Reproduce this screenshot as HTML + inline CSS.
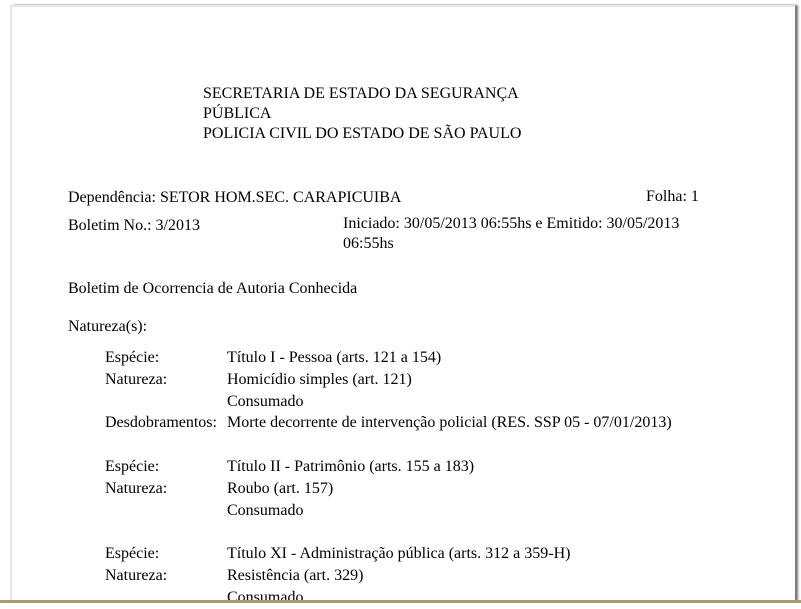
<!DOCTYPE html>
<html><head><style>
html,body{margin:0;padding:0;background:#fff;width:801px;height:603px;overflow:hidden;font-family:"Liberation Serif",serif;font-size:16px;color:#000}
.page{position:absolute;left:10px;top:5px;width:783px;height:594px;border-left:2px solid #e6e6e6;border-top:2px solid #e6e6e6;box-shadow:3px 0 2px #777}
.t{position:absolute;white-space:nowrap;line-height:20px}
.bot{position:absolute;left:0;top:600px;width:801px;height:3px;background:#a89c78}
</style></head><body>
<div class="page"></div>
<div class="t" style="left:203px;top:84px">SECRETARIA DE ESTADO DA SEGURANÇA<br>PÚBLICA<br>POLICIA CIVIL DO ESTADO DE SÃO PAULO</div>
<div class="t" style="left:68px;top:188px">Dependência: SETOR HOM.SEC. CARAPICUIBA</div>
<div class="t" style="left:646px;top:187px">Folha: 1</div>
<div class="t" style="left:68px;top:216px">Boletim No.: 3/2013</div>
<div class="t" style="left:343px;top:214px">Iniciado: 30/05/2013 06:55hs e Emitido: 30/05/2013<br>06:55hs</div>
<div class="t" style="left:68px;top:279px">Boletim de Ocorrencia de Autoria Conhecida</div>
<div class="t" style="left:68px;top:317px">Natureza(s):</div>
<div class="t" style="left:105px;top:347px;line-height:21.8px">Espécie:<br>Natureza:<br><br>Desdobramentos:<br><br>Espécie:<br>Natureza:<br><br><br>Espécie:<br>Natureza:</div>
<div class="t" style="left:227px;top:347px;line-height:21.8px">Título I - Pessoa (arts. 121 a 154)<br>Homicídio simples (art. 121)<br>Consumado<br>Morte decorrente de intervenção policial (RES. SSP 05 - 07/01/2013)<br><br>Título II - Patrimônio (arts. 155 a 183)<br>Roubo (art. 157)<br>Consumado<br><br>Título XI - Administração pública (arts. 312 a 359-H)<br>Resistência (art. 329)<br>Consumado</div>
<div class="bot"></div>
</body></html>
